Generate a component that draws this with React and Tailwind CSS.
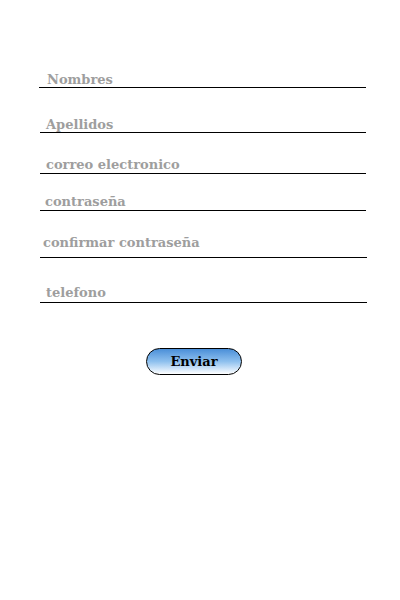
export default function App() {
  const fields = [
    { label: "Nombres", h: "h-[88px]", ml: "ml-[39px]", w: "w-[327px]", pl: "pl-[8px]", pb: "pb-0 -mb-[1px]" },
    { label: "Apellidos", h: "h-[45px]", ml: "ml-[40px]", w: "w-[326px]", pl: "pl-[6px]", pb: "pb-0 -mb-[1px]" },
    { label: "correo electronico", h: "h-[41px]", ml: "ml-[40px]", w: "w-[326px]", pl: "pl-[6px]", pb: "pb-0" },
    { label: "contraseña", h: "h-[37px]", ml: "ml-[40px]", w: "w-[326px]", pl: "pl-[5px]", pb: "pb-0" },
    { label: "confirmar contraseña", h: "h-[47px]", ml: "ml-[40px]", w: "w-[327px]", pl: "pl-[3px]", pb: "pb-[6px]" },
    { label: "telefono", h: "h-[45px]", ml: "ml-[40px]", w: "w-[327px]", pl: "pl-[6px]", pb: "pb-[1px]" },
  ];
  return (
    <div className="w-[400px] h-[600px] bg-white flex flex-col" style={{ fontFamily: '"DejaVu Serif", "Liberation Serif", serif' }}>
      {fields.map((f) => (
        <div key={f.label} className={`${f.h} ${f.ml} ${f.w} flex items-end border-b border-black`}>
          <span className={`${f.pl} ${f.pb} text-[13px] leading-[16px] font-bold text-[#9e9e9e]`}>{f.label}</span>
        </div>
      ))}
      <div className="mt-[45px] ml-[146px] w-[96px] h-[27px] rounded-full border border-black bg-linear-to-b from-[#4a8fd8] via-[#8ec0ee] to-white flex items-center justify-center">
        <span className="text-[13px] font-bold text-black">Enviar</span>
      </div>
    </div>
  );
}
